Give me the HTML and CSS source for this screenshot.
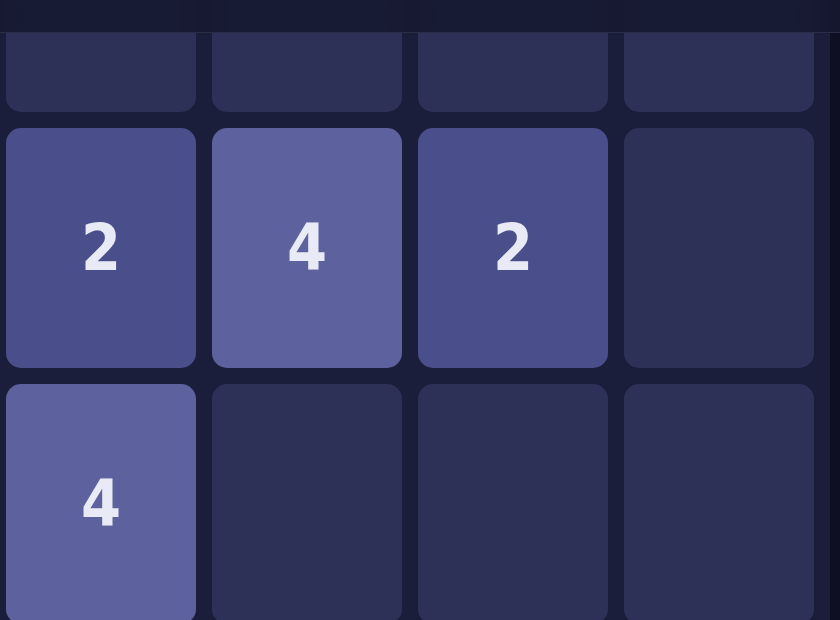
FILE: index.html
```html
<!DOCTYPE html>
<html lang="en">
<head>
<meta charset="utf-8">
<title>2048</title>
<link rel="stylesheet" href="styles.css">
</head>
<body>
<div class="app">
  <header class="topbar"></header>
  <main class="board">
    <div class="grid">
      <div class="tile"></div>
      <div class="tile"></div>
      <div class="tile"></div>
      <div class="tile"></div>

      <div class="tile t2">2</div>
      <div class="tile t4">4</div>
      <div class="tile t2">2</div>
      <div class="tile"></div>

      <div class="tile t4">4</div>
      <div class="tile"></div>
      <div class="tile"></div>
      <div class="tile"></div>

      <div class="tile"></div>
      <div class="tile"></div>
      <div class="tile"></div>
      <div class="tile"></div>
    </div>
  </main>
  <div class="scrollbar"></div>
</div>
</body>
</html>
```
FILE: styles.css
```css
html, body {
  margin: 0;
  padding: 0;
  height: 620px;
  overflow: hidden;
  background: #1b1e3b;
  font-family: "DejaVu Sans", "Liberation Sans", sans-serif;
}

.app {
  display: flex;
  height: 620px;
  overflow: hidden;
}

.topbar {
  position: fixed;
  top: 0;
  left: 0;
  right: 0;
  height: 32px;
  background: rgba(22, 24, 48, 0.88);
  backdrop-filter: blur(12px);
  border-bottom: 1px solid #2b2d47;
  z-index: 10;
}

.board {
  flex: 1;
  padding: 0 16px 0 6px;
}

.grid {
  display: grid;
  grid-template-columns: repeat(4, 190px);
  grid-auto-rows: 240px;
  gap: 16px;
  margin-top: -128px;
}

.tile {
  background: #2d3157;
  border-radius: 15px;
  display: flex;
  align-items: center;
  justify-content: center;
  color: #e8eaf6;
  font-family: "DejaVu Sans Condensed", "DejaVu Sans", sans-serif;
  font-stretch: condensed;
  font-size: 64px;
  font-weight: bold;
}

.t2 {
  background: #4a4e8a;
}

.t4 {
  background: #5d619e;
}

.scrollbar {
  width: 10px;
  background: #0e0f22;
}
```
